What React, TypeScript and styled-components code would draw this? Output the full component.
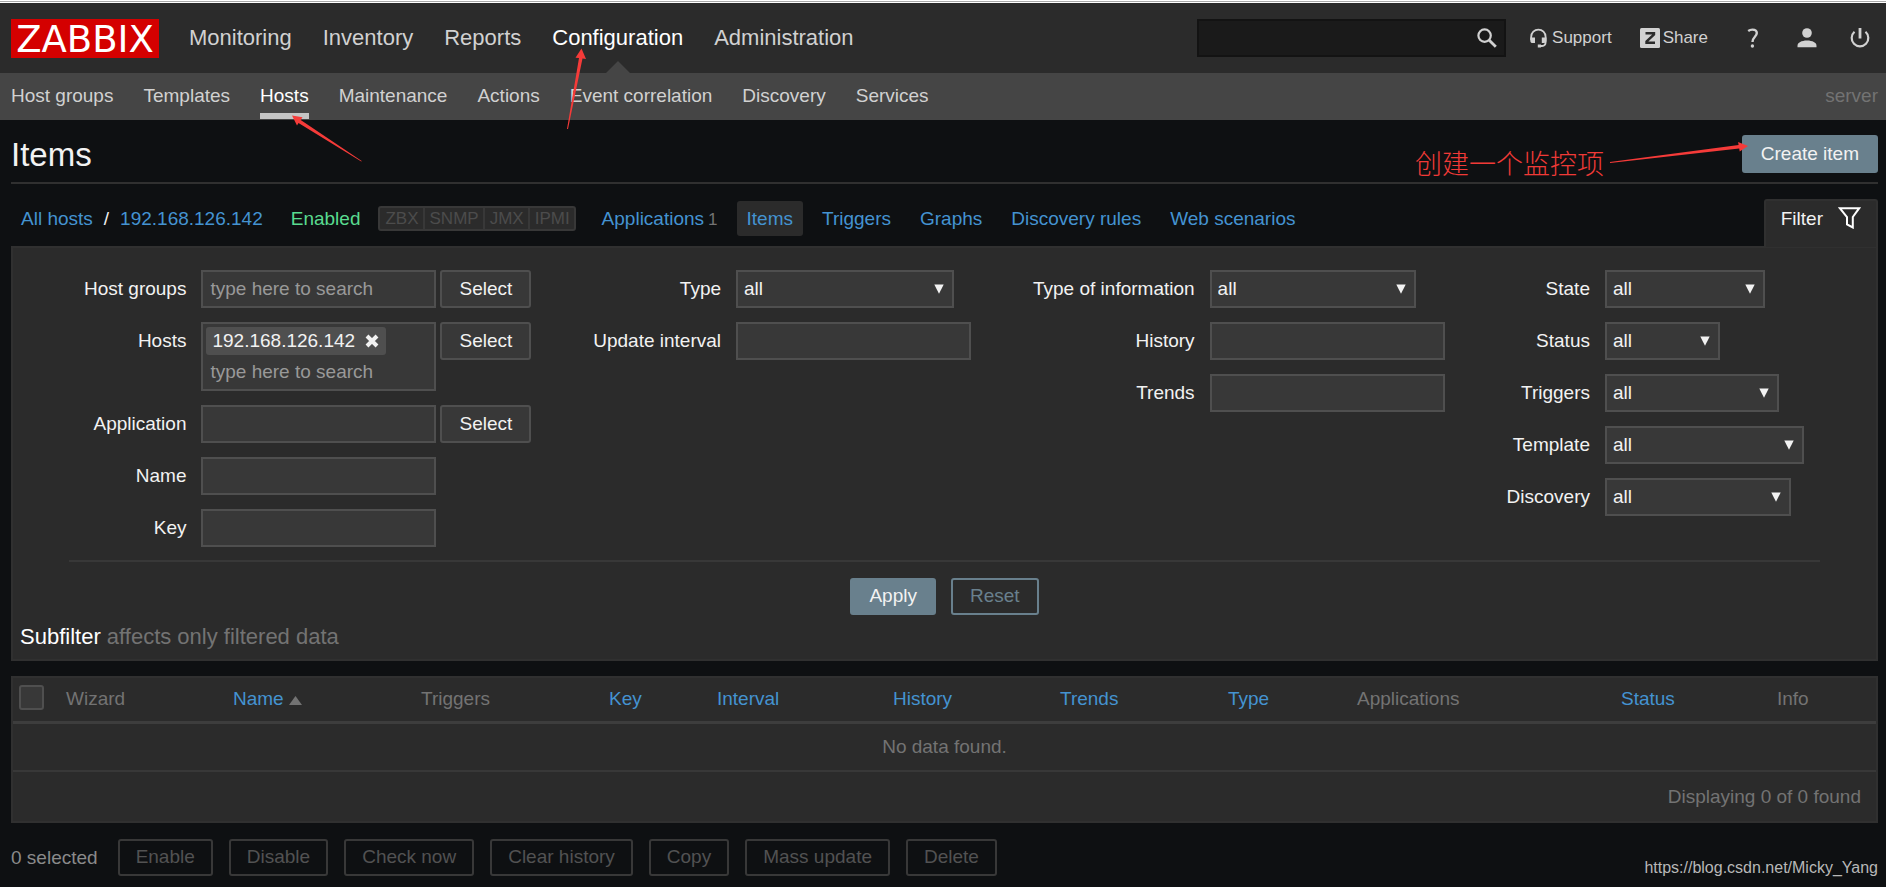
import React from "react";
import styled, { createGlobalStyle, css } from "styled-components";

const c = {
  page: "#0e1012",
  panel: "#2b2b2b",
  submenu: "#454545",
  line: "#383838",
  edge: "#303030",
  field: "#383838",
  fieldEdge: "#4f4f4f",
  text: "#f2f2f2",
  menu: "#d1d1d1",
  dim: "#737373",
  link: "#4493d1",
  steel: "#69808d",
  placeholder: "#999",
};

const GlobalStyle = createGlobalStyle`
  *, *::before, *::after { box-sizing: border-box; }
  html { background: ${c.page}; }
  body {
    margin: 0;
    background: ${c.page};
    color: ${c.text};
    font: 19px/22px "Liberation Sans", Arial, sans-serif;
  }
  button, input, select { font: inherit; color: inherit; border-radius: 0; }
  a { color: inherit; text-decoration: none; }
`;

const Page = styled.div`
  position: relative;
  min-height: 100vh;
`;

const BrowserEdge = styled.div`
  height: 3px;
  border: 1px solid #fff;
  border-width: 1px 0;
  background: #a9a9a9;
`;

const Header = styled.header`
  display: flex;
  align-items: center;
  height: 70px;
  padding: 0 16px 0 11px;
  background: ${c.panel};
`;

const Logo = styled.a`
  width: 148px;
  height: 39px;
  margin-right: 30px;
  background: #d40000;
  color: #fff;
  font: 37px/41px "DejaVu Sans", sans-serif;
  text-align: center;
  white-space: nowrap;
`;

const MainMenu = styled.nav`
  display: flex;
  align-self: stretch;
  gap: 31px;
  flex: 1;
`;

const MainLink = styled.a<{ $active?: boolean }>`
  position: relative;
  font-size: 22px;
  line-height: 70px;
  color: ${(p) => (p.$active ? "#fff" : c.menu)};
  &::after {
    content: ${(p) => (p.$active ? '""' : "none")};
    position: absolute;
    left: calc(50% - 12px);
    bottom: 0;
    border: 12px solid transparent;
    border-top: 0;
    border-bottom-color: ${c.submenu};
  }
`;

const Search = styled.form`
  display: flex;
  align-items: center;
  width: 309px;
  height: 38px;
  margin-right: 23px;
  padding-right: 7px;
  border: 2px solid #131313;
  background: #1a1a1a;
`;

const SearchInput = styled.input`
  flex: 1;
  min-width: 0;
  height: 100%;
  border: 0;
  padding: 0 8px;
  background: transparent;
`;

const IconButton = styled.button`
  display: flex;
  padding: 0;
  border: 0;
  background: transparent;
  color: ${c.menu};
`;

const Tools = styled.nav`
  display: flex;
  align-items: center;
  color: ${c.menu};
  font-size: 17px;
`;

const ToolLink = styled.a<{ $gap?: number }>`
  display: flex;
  align-items: center;
  gap: 3px;
  margin-left: ${(p) => p.$gap ?? 0}px;
`;

const SubMenu = styled.nav`
  display: flex;
  align-items: stretch;
  gap: 30px;
  height: 47px;
  padding: 0 8px 1px 11px;
  background: ${c.submenu};
  line-height: 46px;
`;

const SubLink = styled.a<{ $active?: boolean }>`
  color: ${(p) => (p.$active ? "#fff" : c.menu)};
  border-bottom: 6px solid ${(p) => (p.$active ? "#c4c4c4" : "transparent")};
`;

const ServerName = styled.span`
  margin-left: auto;
  color: ${c.dim};
`;

const Main = styled.main`
  padding: 0 8px 0 11px;
`;

const TitleBar = styled.div`
  display: flex;
  align-items: flex-start;
  justify-content: space-between;
  height: 64px;
  padding-top: 15px;
  border-bottom: 2px solid ${c.edge};
`;

const Title = styled.h1`
  margin: 0;
  font-size: 33px;
  font-weight: 400;
  line-height: 40px;
`;

type Kind = "solid" | "outline" | "field" | "disabled";

const kinds = {
  solid: css`
    border-color: ${c.steel};
    background: ${c.steel};
  `,
  outline: css`
    border-color: ${c.steel};
    background: transparent;
    color: ${c.steel};
  `,
  field: css`
    border-color: ${c.fieldEdge};
    background: ${c.field};
  `,
  disabled: css`
    padding: 0 16px 2px;
    border-color: #383838;
    background: transparent;
    color: #525252;
  `,
};

const Button = styled.button<{ $kind: Kind; $tall?: boolean }>`
  height: ${(p) => (p.$tall ? 38 : 37)}px;
  padding: ${(p) => (p.$tall ? "0 17px" : "0 17px 2px")};
  border: 2px solid;
  border-radius: 3px;
  white-space: nowrap;
  ${(p) => kinds[p.$kind]}
`;

const HostBar = styled.div`
  display: flex;
  align-items: flex-start;
  height: 62px;
  padding-top: 15px;
`;

const Crumbs = styled.div`
  display: flex;
  align-items: center;
  height: 39px;
  padding-left: 10px;
  color: ${c.link};
  white-space: nowrap;
`;

const Slash = styled.span`
  margin: 0 11px;
  color: ${c.text};
`;

const Enabled = styled.a`
  margin: 0 18px 0 28px;
  color: #59db8f;
`;

const Interfaces = styled.div`
  display: flex;
  height: 25px;
  margin-right: 16px;
  border: 2px solid #383838;
  border-radius: 3px;
  background: ${c.panel};
  color: #4c4c4c;
  font-size: 17px;
`;

const Interface = styled.span`
  padding: 0 4px 0 5px;
  & + & {
    border-left: 2px solid #383838;
  }
`;

const Tabs = styled.nav`
  display: flex;
  align-items: center;
  gap: 9px;
`;

const Tab = styled.a<{ $active?: boolean }>`
  height: 35px;
  padding: 0 10px;
  border-radius: 3px;
  line-height: 35px;
  background: ${(p) => (p.$active ? c.panel : "transparent")};
`;

const Count = styled.span`
  margin-left: 4px;
  color: ${c.dim};
  font-size: 17px;
`;

const FilterTab = styled.button`
  display: flex;
  align-items: flex-start;
  gap: 15px;
  height: 48px;
  margin-left: auto;
  padding: 6px 15px 0;
  border: 2px solid ${c.edge};
  border-bottom: 0;
  border-radius: 3px 3px 0 0;
  background: ${c.panel};
  line-height: 24px;
`;

const FilterPanel = styled.section`
  padding: 22px 0 6px;
  border: 2px solid ${c.edge};
  background: ${c.panel};
`;

const Columns = styled.div`
  display: flex;
  justify-content: space-between;
  margin: 0 56px;
  padding: 0 16px 13px 15px;
  border-bottom: 2px solid ${c.line};
`;

const Column = styled.div`
  display: grid;
  grid-template-columns: auto auto;
  align-content: start;
  justify-items: start;
  gap: 14px 15px;
`;

const Label = styled.label`
  justify-self: end;
  line-height: 37px;
  white-space: nowrap;
`;

const FieldGroup = styled.div`
  display: flex;
  align-items: flex-start;
  gap: 4px;
`;

const TextInput = styled.input`
  width: 235px;
  height: 38px;
  padding: 0 7px;
  border: 2px solid ${c.fieldEdge};
  background: ${c.field};
  &::placeholder { color: ${c.placeholder}; opacity: 1; }
`;

const MultiSelect = styled.div`
  width: 235px;
  height: 69px;
  padding: 3px;
  border: 2px solid ${c.fieldEdge};
  background: ${c.field};
`;

const Chip = styled.span`
  display: flex;
  align-items: center;
  justify-content: space-between;
  width: 180px;
  height: 28px;
  padding: 0 7px 0 6px;
  border-radius: 3px;
  background: ${c.fieldEdge};
`;

const ChipInput = styled.input`
  display: block;
  width: 100%;
  height: 34px;
  padding: 0 4px;
  border: 0;
  background: transparent;
  &::placeholder { color: ${c.placeholder}; opacity: 1; }
`;

const SelectWrap = styled.div<{ $width: number }>`
  display: grid;
  align-items: center;
  width: ${(p) => p.$width}px;
  & > * { grid-area: 1 / 1; }
  & > svg { justify-self: end; margin-right: 10px; pointer-events: none; }
`;

const NativeSelect = styled.select`
  width: 100%;
  height: 38px;
  padding: 0 6px;
  border: 2px solid ${c.fieldEdge};
  background: ${c.field};
  appearance: none;
`;

const Actions = styled.div`
  display: flex;
  justify-content: center;
  gap: 15px;
  padding: 16px 0 6px;
`;

const Subfilter = styled.h3`
  margin: 0;
  padding: 0 7px;
  font-size: 22px;
  font-weight: 400;
  line-height: 32px;
  color: ${c.dim};
  span { color: #fff; }
`;

const Table = styled.table`
  width: 100%;
  margin-top: 15px;
  table-layout: fixed;
  border-collapse: separate;
  border-spacing: 0;
  border: 2px solid ${c.edge};
  background: ${c.panel};
  color: ${c.dim};
`;

const Th = styled.th`
  height: 46px;
  padding: 0 8px 2px;
  border-bottom: 3px solid #3d3d3d;
  font-weight: 400;
  text-align: left;
  white-space: nowrap;
  a { color: ${c.link}; }
  svg { margin-left: 5px; }
`;

const CheckTh = styled(Th)`
  padding: 0 6px 5px;
`;

const Check = styled.input`
  display: block;
  appearance: none;
  width: 25px;
  height: 25px;
  margin: 0;
  border: 2px solid ${c.fieldEdge};
  border-radius: 3px;
  background: ${c.field};
`;

const Td = styled.td<{ $align: string; $last?: boolean }>`
  height: ${(p) => (p.$last ? 49 : 48)}px;
  padding: 0 15px;
  text-align: ${(p) => p.$align};
  border-bottom: ${(p) => (p.$last ? 0 : 2)}px solid ${c.line};
`;

const Footer = styled.footer`
  display: flex;
  align-items: center;
  gap: 16px;
  padding: 16px 0 11px;
`;

const Selected = styled.span`
  margin-right: 4px;
  color: #8a8a8a;
`;

const Watermark = styled.a`
  align-self: flex-end;
  margin-left: auto;
  font-size: 16px;
  line-height: 16px;
  color: #b8b8b8;
`;

const Annotations = styled.svg`
  position: absolute;
  left: 0;
  top: 0;
  pointer-events: none;
  overflow: visible;
`;

const RightNote = styled.div`
  position: absolute;
  right: 137px;
  top: 145px;
  display: flex;
  align-items: flex-start;
  gap: 6px;
  pointer-events: none;
  color: #f03a37;
  font: 300 27px/36px "Noto Sans CJK SC", sans-serif;
  svg { overflow: visible; }
`;

function SelectField({ id, label, width }: { id: string; label: string; width: number }) {
  return (
    <>
      <Label htmlFor={id}>{label}</Label>
      <SelectWrap $width={width}>
        <NativeSelect id={id}>
          <option>all</option>
        </NativeSelect>
        <svg width="10" height="10" viewBox="0 0 10 10">
          <path d="M0.3 0.5h9.400L5 9.700z" fill={c.text} />
        </svg>
      </SelectWrap>
    </>
  );
}

function TextField(p: { id: string; label: string; placeholder?: string; picker?: boolean }) {
  return (
    <>
      <Label htmlFor={p.id}>{p.label}</Label>
      <FieldGroup>
        <TextInput id={p.id} type="text" placeholder={p.placeholder} />
        {p.picker && <Button type="button" $kind="field" $tall>Select</Button>}
      </FieldGroup>
    </>
  );
}

const mainMenu = ["Monitoring", "Inventory", "Reports", "Configuration", "Administration"];
const subMenu = ["Host groups", "Templates", "Hosts", "Maintenance", "Actions", "Event correlation", "Discovery", "Services"];
const bulkActions = ["Enable", "Disable", "Check now", "Clear history", "Copy", "Mass update", "Delete"];

const headers: { label: string; width: number; link?: boolean; sorted?: boolean }[] = [
  { label: "Wizard", width: 167 },
  { label: "Name", width: 188, link: true, sorted: true },
  { label: "Triggers", width: 188 },
  { label: "Key", width: 108, link: true },
  { label: "Interval", width: 176, link: true },
  { label: "History", width: 167, link: true },
  { label: "Trends", width: 168, link: true },
  { label: "Type", width: 129, link: true },
  { label: "Applications", width: 264 },
  { label: "Status", width: 156, link: true },
  { label: "Info", width: 107 },
];

export default function App() {
  return (
    <Page>
      <GlobalStyle />
      <BrowserEdge />
      <Header>
        <Logo href="#">ZABBIX</Logo>
        <MainMenu>
          {mainMenu.map((m) => (
            <MainLink key={m} href="#" $active={m === "Configuration"}>{m}</MainLink>
          ))}
        </MainMenu>
        <Search>
          <SearchInput type="text" aria-label="Search" />
          <IconButton type="button" aria-label="Search">
            <svg width="20" height="20" viewBox="0 0 20 20" fill="none" stroke="currentColor">
              <circle cx="7.600" cy="7.600" r="6.200" strokeWidth="2.200" />
              <path d="M12 12l6.800 6.800" strokeWidth="2.800" />
            </svg>
          </IconButton>
        </Search>
        <Tools>
          <ToolLink href="#">
            <svg width="20" height="20" viewBox="0 0 20 20" fill="none" stroke="currentColor">
              <path d="M2.200 12V8.800a7 7 0 0 1 14.400 0v5.400c0 2.400-1.200 3.600-3.600 3.800h-2" strokeWidth="1.800" />
              <path d="M1.300 9.500h4.700v5.500h-2.200q-2.500 0-2.500-2.600zM12.800 9.500h4.700v3q0 2.500-2.500 2.500h-2.200z" fill="currentColor" stroke="none" />
              <path d="M8.800 18h3.200" strokeWidth="3" />
            </svg>
            Support
          </ToolLink>
          <ToolLink href="#" $gap={28}>
            <svg width="20" height="20" viewBox="0 0 20 20">
              <rect width="20" height="20" rx="1.500" fill="currentColor" />
              <path d="M5.500 5.200h8.500v1.300L6.500 13.500v1.300h8.500" fill="none" stroke={c.panel} strokeWidth="2.400" />
            </svg>
            Share
          </ToolLink>
          <ToolLink href="#" $gap={39} aria-label="Help">
            <svg width="12" height="20" viewBox="0 0 12 20" fill="none" stroke="currentColor" strokeWidth="2.400">
              <path d="M1.200 3C2.500 2 3.800 1.600 5.400 1.600c2.700 0 4.400 1.200 4.400 3.500 0 3.600-4.300 4-4.300 8.900" />
              <circle cx="5.400" cy="18" r="1.700" fill="currentColor" stroke="none" />
            </svg>
          </ToolLink>
          <ToolLink href="#" $gap={38} aria-label="User">
            <svg width="20" height="20" viewBox="0 0 20 20" fill="currentColor">
              <circle cx="10" cy="5" r="4.800" />
              <path d="M0.500 19.300v-1.600c0-3 4-5.200 9.500-5.200s9.500 2.200 9.500 5.200v1.600z" />
            </svg>
          </ToolLink>
          <ToolLink href="#" $gap={33} aria-label="Sign out">
            <svg width="20" height="20" viewBox="0 0 20 20" fill="none" stroke="currentColor">
              <path d="M10 0v10.500" strokeWidth="2.800" />
              <path d="M4.500 3.800a8.300 8.300 0 1 0 11 0" strokeWidth="2.200" />
            </svg>
          </ToolLink>
        </Tools>
      </Header>
      <SubMenu>
        {subMenu.map((m) => (
          <SubLink key={m} href="#" $active={m === "Hosts"}>{m}</SubLink>
        ))}
        <ServerName>server</ServerName>
      </SubMenu>
      <Main>
        <TitleBar>
          <Title>Items</Title>
          <Button type="button" $kind="solid" $tall>Create item</Button>
        </TitleBar>
        <HostBar>
          <Crumbs>
            <a href="#">All hosts</a>
            <Slash>/</Slash>
            <a href="#">192.168.126.142</a>
            <Enabled href="#">Enabled</Enabled>
            <Interfaces>
              {["ZBX", "SNMP", "JMX", "IPMI"].map((i) => <Interface key={i}>{i}</Interface>)}
            </Interfaces>
            <Tabs>
              <Tab href="#">Applications<Count>1</Count></Tab>
              <Tab href="#" $active>Items</Tab>
              <Tab href="#">Triggers</Tab>
              <Tab href="#">Graphs</Tab>
              <Tab href="#">Discovery rules</Tab>
              <Tab href="#">Web scenarios</Tab>
            </Tabs>
          </Crumbs>
          <FilterTab type="button">
            Filter
            <svg width="23" height="22" viewBox="0 0 23 22" fill="none" stroke="#fff" strokeWidth="2">
              <path d="M1.800 1.200h19.400L14.800 10v10.500l-5.800-3.200V10z" />
            </svg>
          </FilterTab>
        </HostBar>
        <FilterPanel>
          <Columns>
            <Column>
              <TextField id="groups" label="Host groups" placeholder="type here to search" picker />
              <Label htmlFor="hosts">Hosts</Label>
              <FieldGroup>
                <MultiSelect>
                  <Chip>
                    192.168.126.142
                    <IconButton type="button" aria-label="Remove">
                      <svg width="14" height="14" viewBox="0 0 14 14">
                        <path d="M2 2l10 10M12 2L2 12" stroke={c.text} strokeWidth="4" />
                      </svg>
                    </IconButton>
                  </Chip>
                  <ChipInput id="hosts" type="text" placeholder="type here to search" />
                </MultiSelect>
                <Button type="button" $kind="field" $tall>Select</Button>
              </FieldGroup>
              <TextField id="application" label="Application" picker />
              <TextField id="name" label="Name" />
              <TextField id="key" label="Key" />
            </Column>
            <Column>
              <SelectField id="type" label="Type" width={218} />
              <TextField id="interval" label="Update interval" />
            </Column>
            <Column>
              <SelectField id="info" label="Type of information" width={206} />
              <TextField id="history" label="History" />
              <TextField id="trends" label="Trends" />
            </Column>
            <Column>
              <SelectField id="state" label="State" width={160} />
              <SelectField id="status" label="Status" width={115} />
              <SelectField id="triggers" label="Triggers" width={174} />
              <SelectField id="template" label="Template" width={199} />
              <SelectField id="discovery" label="Discovery" width={186} />
            </Column>
          </Columns>
          <Actions>
            <Button type="button" $kind="solid">Apply</Button>
            <Button type="button" $kind="outline">Reset</Button>
          </Actions>
          <Subfilter><span>Subfilter</span> affects only filtered data</Subfilter>
        </FilterPanel>
        <Table>
          <colgroup>
            <col width={45} />
            {headers.map((h) => <col key={h.label} width={h.width} />)}
          </colgroup>
          <thead>
            <tr>
              <CheckTh><Check type="checkbox" aria-label="Select all" /></CheckTh>
              {headers.map((h) => (
                <Th key={h.label}>
                  {h.link ? <a href="#">{h.label}</a> : h.label}
                  {h.sorted && (
                    <svg width="13" height="9" viewBox="0 0 13 9"><path d="M6.500 0L13 9H0z" fill={c.dim} /></svg>
                  )}
                </Th>
              ))}
            </tr>
          </thead>
          <tbody>
            <tr><Td colSpan={12} $align="center">No data found.</Td></tr>
            <tr><Td colSpan={12} $align="right" $last>Displaying 0 of 0 found</Td></tr>
          </tbody>
        </Table>
        <Footer>
          <Selected>0 selected</Selected>
          {bulkActions.map((b) => (
            <Button key={b} type="button" disabled $kind="disabled">{b}</Button>
          ))}
          <Watermark href="#">https://blog.csdn.net/Micky_Yang</Watermark>
        </Footer>
      </Main>
      <Annotations width="10" height="10" fill="#f53b39">
        <path d="M581.500 48.500l4.500 10.500-3.500-.4-14.500 70.400-1-.1 12-70.800-3.500-.3z" />
        <path d="M292 115.500l10.500 1.700-1.800 2.800 61 41-.4.600-62.800-38.600-1.500 2.500z" />
      </Annotations>
      <RightNote>
        创建一个监控项
        <svg width="139" height="20" viewBox="0 0 139 20" fill="#f53b39">
          <path d="M138 1l-8.300 5.500-.5-3L0 18v-1L128.600 0l-.5-3z" />
        </svg>
      </RightNote>
    </Page>
  );
}
